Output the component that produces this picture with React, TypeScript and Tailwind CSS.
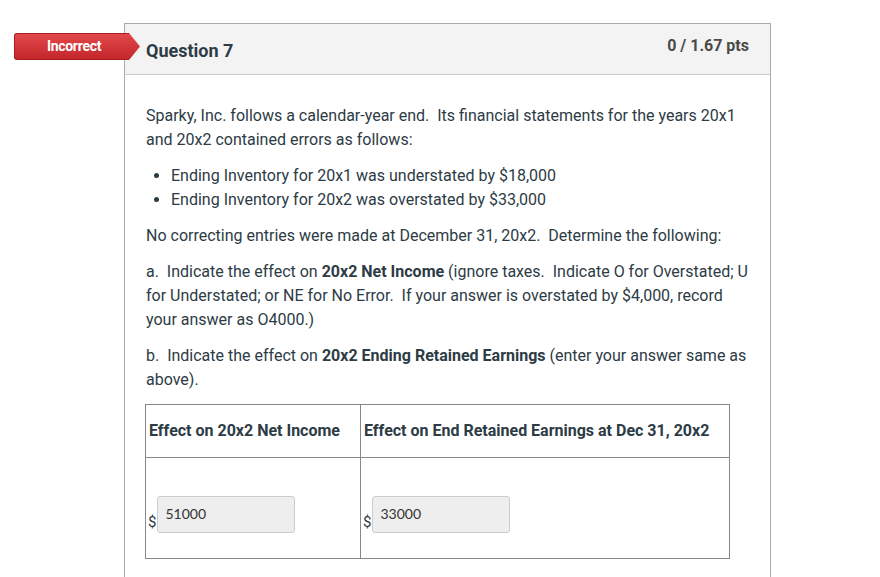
import React from 'react'

const FONT = { fontFamily: 'Roboto, "Liberation Sans", sans-serif' }

function AnswerCell({ value }: { value: string }) {
  return (
    <td className="border border-[#888] pl-[2px] pr-[3px] pt-[38px] pb-[25px] align-top">
      <div className="flex items-end">
        <span className="text-[15px] leading-none text-[#2d3b45] mb-[3px] mr-[1px]">$</span>
        <div
          className="w-[138px] h-[37px] rounded-[3px] border border-[#ccc] bg-[#eeeeee] px-[7px] pt-[8px] text-[14px] leading-[18px] text-[#333]"
          style={{ fontFamily: 'Lato, "Open Sans", sans-serif' }}
        >
          {value}
        </div>
      </div>
    </td>
  )
}

export default function App() {
  return (
    <div className="min-h-[577px] bg-white pt-[23px] overflow-hidden" style={FONT}>
      <div className="relative ml-[124px] w-[647px] border border-b-0 border-[#aaa] h-[560px]">
        {/* incorrect badge */}
        <div className="absolute left-[-111px] top-[9px] flex items-center">
          <div className="h-[27px] w-[115px] rounded-l-[3px] bg-gradient-to-b from-[#e2474b] to-[#c3262b] border border-[#a81d22] border-r-0 flex items-center justify-center">
            <span className="text-white text-[14px] font-bold tracking-[-0.3px] pl-[4px]">Incorrect</span>
          </div>
          <svg width="11" height="27" viewBox="0 0 11 27" className="block">
            <defs>
              <linearGradient id="rg" x1="0" y1="0" x2="0" y2="1">
                <stop offset="0" stopColor="#e2474b" />
                <stop offset="1" stopColor="#c3262b" />
              </linearGradient>
            </defs>
            <path d="M0 0 L0 27 L11 13.5 Z" fill="url(#rg)" />
          </svg>
        </div>

        <div className="flex items-center justify-between h-[51px] bg-[#f3f3f3] border-b border-[#c7cdd1] pl-[21px] pr-[21px]">
          <h2 className="text-[18px] font-bold text-[#2d3b45] mt-[3px]">Question 7</h2>
          <span className="text-[16px] font-bold text-[#4a4a4a] mb-[6px]">0 / 1.67 pts</span>
        </div>

        <div className="pl-[21px] pr-[20px] pt-[29px] text-[16px] leading-[24px] text-[#2d3b45]">
          <p>
            Sparky, Inc. follows a calendar-year end.&nbsp; Its financial statements for the years 20x1 and 20x2
            contained errors as follows:
          </p>
          <ul className="mt-[12px] list-disc pl-[25px]">
            <li>Ending Inventory for 20x1 was understated by $18,000</li>
            <li>Ending Inventory for 20x2 was overstated by $33,000</li>
          </ul>
          <p className="mt-[12px]">No correcting entries were made at December 31, 20x2.&nbsp; Determine the following:</p>
          <p className="mt-[12px]">
            a.&nbsp; Indicate the effect on <strong>20x2 Net Income</strong> (ignore taxes.&nbsp; Indicate O for
            Overstated; U for Understated; or NE for No Error.&nbsp; If your answer is overstated by $4,000, record your
            answer as O4000.)
          </p>
          <p className="mt-[12px]">
            b.&nbsp; Indicate the effect on <strong>20x2 Ending Retained Earnings</strong> (enter your answer same as
            above).
          </p>

          <table className="mt-[12px] ml-[-1px] border-collapse">
            <thead>
              <tr>
                <th className="w-[215px] h-[53px] border border-[#888] px-[3px] text-left font-bold">
                  Effect on 20x2 Net Income
                </th>
                <th className="w-[369px] border border-[#888] px-[3px] text-left font-bold">
                  Effect on End Retained Earnings at Dec 31, 20x2
                </th>
              </tr>
            </thead>
            <tbody>
              <tr>
                <AnswerCell value="51000" />
                <AnswerCell value="33000" />
              </tr>
            </tbody>
          </table>
        </div>
      </div>
    </div>
  )
}
